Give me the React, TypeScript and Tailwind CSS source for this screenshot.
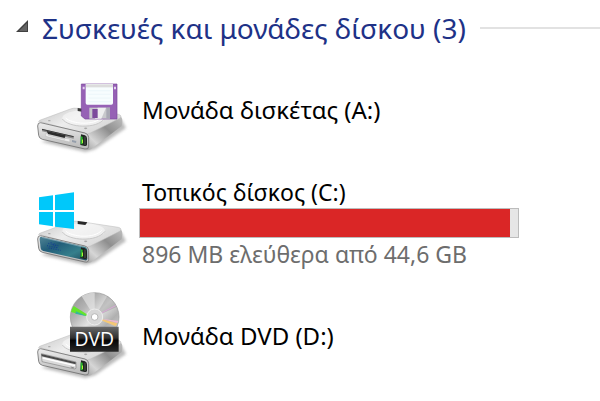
import type { ReactNode } from 'react'

function DriveBody() {
  return (
    <g>
      <defs>
        <linearGradient id="top" x1="0" y1="0.2" x2="1" y2="0.8">
          <stop offset="0" stopColor="#cdcdcd" />
          <stop offset="0.4" stopColor="#ededed" />
          <stop offset="1" stopColor="#d2d2d2" />
        </linearGradient>
        <linearGradient id="side" x1="0" y1="1" x2="1" y2="0">
          <stop offset="0" stopColor="#a0a0a0" />
          <stop offset="0.25" stopColor="#d6d6d6" />
          <stop offset="0.6" stopColor="#8e8e8e" />
          <stop offset="1" stopColor="#c0c0c0" />
        </linearGradient>
        <linearGradient id="front" x1="0" y1="0" x2="0" y2="1">
          <stop offset="0" stopColor="#ececec" />
          <stop offset="1" stopColor="#b8b8b8" />
        </linearGradient>
        <filter id="soft" x="-10%" y="-20%" width="120%" height="140%">
          <feGaussianBlur stdDeviation="5" />
        </filter>
      </defs>
      {/* Shadow */}
      <path d="M48 245 L182 276 L210 268 L303 204 L290 180 Z" fill="#777" opacity="0.5" filter="url(#soft)" />
      {/* Side */}
      <path d="M180 218 L285 168 Q293 172 292 186 L290 198 L200 266 Q192 272 182 267 Z" fill="url(#side)" />
      {/* Top */}
      <path d="M46 185 Q37 187 44 181 L136 147 Q145 143 160 145 L280 163 Q294 167 284 175 L196 219 Q188 223 178 221 Z" fill="url(#top)" stroke="#bababa" strokeWidth="1.5" />
      <ellipse cx="176" cy="174" rx="64" ry="23" fill="#f8f8f8" opacity="0.6" />
      <path d="M112 177 C130 203 215 209 240 175" fill="none" stroke="#c8c8c8" strokeWidth="3" />
      <path d="M122 174 C140 192 208 198 230 172" fill="none" stroke="#fff" strokeWidth="3" />
      <ellipse cx="73" cy="182" rx="4" ry="2" fill="#aaa" />
      <ellipse cx="182" cy="205" rx="5" ry="2.5" fill="#aaa" />
      {/* Front */}
      <path d="M47 188 L180 219 Q190 222 191 232 L191 259 Q191 269 180 267 L52 238 Q42 235 41 226 L38 198 Q38 187 47 188 Z" fill="url(#front)" stroke="#707070" strokeWidth="2.5" />
    </g>
  )
}

function StatusLight() {
  return (
    <g>
      <path d="M168 223 L180 226 Q186 229 186 235 L186 254 Q185 259 179 258 L166 255 Z" fill="#202522" />
      <path d="M167 229 L173 230 L173 253 L167 252 Z" fill="#27b72b" />
      <path d="M171 238 L174 239 L174 250 L171 249 Z" fill="#b2f43b" />
      <path d="M180 230 L180 255" stroke="#68716a" strokeWidth="2" />
    </g>
  )
}

function DriveSvg({ children }: { children: ReactNode }) {
  return (
    <svg className="h-[100px] w-[110px] shrink-0" viewBox="0 0 330 300" aria-hidden="true">
      <DriveBody />
      {children}
    </svg>
  )
}

function FloppyIcon() {
  return (
    <DriveSvg>
      {/* Slot */}
      <path d="M51 207 L146 229 L146 236 L51 214 Z" fill="#8a8a8a" />
      <path d="M51 208 L146 230" stroke="#3a3a3a" strokeWidth="3" />
      <path d="M65 213 L122 226 L119 234 L69 222 Z" fill="#2c2c2c" />
      <path d="M62 220 L62 229 L134 246 L135 238 L122 235 L119 238 L70 226 L68 221 Z" fill="#ededed" stroke="#aaa" strokeWidth="1" />
      <path d="M141 240 L154 243 L153 249 L141 246 Z" fill="#959eab" />
      <StatusLight />
      <path d="M158 144 L176 147 L176 156 L158 153 Z" fill="#3a3a3a" />
      {/* Diskette */}
      <path d="M169 72 L276 72 L276 177 L180 177 L169 168 Z" fill="#9661b5" stroke="#79469b" strokeWidth="2" />
      <path d="M182 72 H264 V129 Q264 134 259 134 H187 Q182 134 182 129 Z" fill="#f7fdfe" />
      <path d="M183 73 H264 V82 H183 Z" fill="#dcdcdc" />
      <path d="M190 92 H257 M190 103 H257 M190 114 H257 M190 125 H257" stroke="#e9f5f7" strokeWidth="2" />
      <path d="M173 80 h6 v8 h-6 z M267 80 h6 v8 h-6 z" fill="#e4d1ef" />
      <path d="M193 143 H255 V176 H193 Z" fill="#c8c8cc" />
      <path d="M218 143 H243 L229 176 H210 Z" fill="#eeeeef" />
      <path d="M202 147 H218 V174 H202 Z" fill="#7c4a9c" />
      <path d="M244 143 H255 V176 H244 Z" fill="#a9a9b4" />
    </DriveSvg>
  )
}

function LocalDiskIcon() {
  return (
    <DriveSvg>
      <defs>
        <linearGradient id="glass" x1="0" y1="0" x2="1" y2="1">
          <stop offset="0" stopColor="#528596" />
          <stop offset="0.35" stopColor="#215d79" />
          <stop offset="0.7" stopColor="#367f8c" />
          <stop offset="1" stopColor="#204b5d" />
        </linearGradient>
      </defs>
      <path d="M49 191 L178 221 Q187 224 187 232 L187 257 Q186 263 180 262 L55 234 Q48 232 47 226 L44 200 Q43 190 49 191 Z" fill="url(#glass)" />
      <path d="M70 211 L102 219 M66 218 L98 225 M71 225 L107 232 M77 207 L91 223 M87 211 L99 228" stroke="#153d92" strokeWidth="3" strokeDasharray="3 4" />
      <path d="M51 193 L174 222" stroke="#93b2bc" strokeWidth="2" />
      <StatusLight />
      <path d="M158 144 L187 148 L181 156 L158 153 Z" fill="#282828" />
      {/* Windows logo */}
      <path d="M42 73 L84 67 V111 H42 Z M90 66 L147 58 V111 H90 Z M42 117 H84 V160 L42 154 Z M90 117 H147 V168 L90 161 Z" fill="#00c8fa" />
    </DriveSvg>
  )
}

function DvdIcon() {
  return (
    <DriveSvg>
      <defs>
        <linearGradient id="disc" x1="0" y1="0" x2="1" y2="1">
          <stop offset="0" stopColor="#8c8c8c" />
          <stop offset="0.3" stopColor="#b4b4b4" />
          <stop offset="0.5" stopColor="#e2e2e2" />
          <stop offset="0.7" stopColor="#b0b0b0" />
          <stop offset="1" stopColor="#dcdcdc" />
        </linearGradient>
        <linearGradient id="plate" x1="0" y1="0" x2="0" y2="1">
          <stop offset="0" stopColor="#6a6a6a" />
          <stop offset="0.45" stopColor="#303030" />
          <stop offset="0.55" stopColor="#050505" />
          <stop offset="1" stopColor="#292929" />
        </linearGradient>
      </defs>
      {/* Tray */}
      <path d="M49 203 L153 228 L153 247 L149 249 L51 227 Z" fill="#dadada" stroke="#858585" strokeWidth="2" />
      <path d="M49 204 L152 229 L152 235 L50 211 Z" fill="#4a4a4a" />
      <path d="M53 216 L150 239" stroke="#fff" strokeWidth="4" />
      <path d="M137 243 L148 246" stroke="#888" strokeWidth="3" />
      <StatusLight />
      {/* Disc */}
      <circle cx="209" cy="93" r="73" fill="url(#disc)" stroke="#979797" strokeWidth="2" />
      <path d="M209 93 L170 31 Q190 19 209 20 Z" fill="#e7e7e7" opacity="0.65" />
      <path d="M209 93 L247 30 Q267 43 275 63 Z" fill="#898989" opacity="0.35" />
      <path d="M188 86 L146 60 Q139 70 138 78 L186 91 Z" fill="#65e52a" />
      <path d="M186 91 L151 83 L153 76 Z" fill="#36b69b" />
      <path d="M230 99 L277 112 L272 121 L228 103 Z" fill="#f5c876" />
      <path d="M230 98 L280 105 L277 111 Z" fill="#eeb8d0" />
      <path d="M227 82 L272 59" stroke="#d7a8d6" strokeWidth="3" />
      <circle cx="209" cy="93" r="24" fill="#d7d7d7" stroke="#ededed" strokeWidth="3" />
      <circle cx="209" cy="93" r="10" fill="#fff" stroke="#b8b8b8" strokeWidth="3" />
      {/* Label */}
      <path d="M135 122 H281 V197 H135 Z" fill="url(#plate)" />
      <text x="208" y="180" textAnchor="middle" fill="#fff" fontSize="58" fontFamily="Open Sans, sans-serif">DVD</text>
    </DriveSvg>
  )
}

export default function App() {
  return (
    <main className="min-h-screen bg-white pb-4 font-['Noto_Sans',sans-serif] text-black">
      <header className="flex h-[60px] items-center pb-1 pl-4">
        <svg className="mb-1 h-3 w-3 shrink-0" viewBox="0 0 12 12" aria-hidden="true">
          <path d="M12 0 V12 H0 Z" fill="#404040" />
          <path d="M11 3 V11 H3 Z" fill="#646464" />
        </svg>
        <h1 className="ml-3.5 shrink-0 text-[28px] leading-9 text-[#1e3287]">Συσκευές και μονάδες δίσκου (3)</h1>
        <div className="ml-3.5 h-0.5 flex-1 bg-[#e2e2e2]" />
      </header>

      <ul className="flex flex-col gap-[13px] pl-[25px]">
        <li className="flex items-center gap-1">
          <FloppyIcon />
          <div className="pl-[3px] text-2xl leading-8">Μονάδα δισκέτας (A:)</div>
        </li>
        <li className="flex items-center gap-1">
          <LocalDiskIcon />
          <div className="min-w-0 max-w-[380px] flex-1 text-[23px] leading-8">
            <div className="pl-[3px]" id="disk-c">Τοπικός δίσκος (C:)</div>
            <div
              className="h-[30px] border border-[#bcbcbc] bg-[#e6e6e6]"
              role="meter"
              aria-labelledby="disk-c"
              aria-valuemin={0}
              aria-valuemax={100}
              aria-valuenow={98}
            >
              <div className="h-full w-[98%] bg-[#da2626]" />
            </div>
            <div className="pl-[3px] text-[#6d6d6d]">896 MB ελεύθερα από 44,6 GB</div>
          </div>
        </li>
        <li className="flex items-center gap-1">
          <DvdIcon />
          <div className="pl-[3px] text-2xl leading-8">Μονάδα DVD (D:)</div>
        </li>
      </ul>
    </main>
  )
}
